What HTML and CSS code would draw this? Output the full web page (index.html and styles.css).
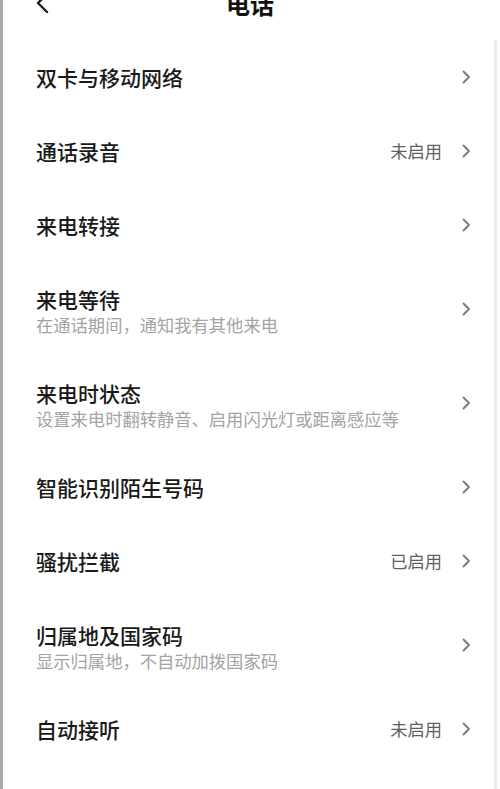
FILE: index.html
```html
<!DOCTYPE html>
<html lang="zh-CN">
<head>
<meta charset="utf-8">
<title>电话</title>
<link rel="stylesheet" href="styles.css">
</head>
<body>
<div class="screen">
  <header class="header">
    <span class="back">
      <svg width="14" height="22" viewBox="0 0 14 22"><path d="M11 1 L2 10 L11 19" fill="none" stroke="#1a1a1a" stroke-width="2.4" stroke-linecap="round" stroke-linejoin="round"/></svg>
    </span>
    <h1 class="title">电话</h1>
  </header>
  <main class="list">
    <div class="row"><div class="text"><div class="label">双卡与移动网络</div></div><span class="chev"><svg width="9" height="14" viewBox="0 0 9 14"><path d="M1.5 1.5 L7 7 L1.5 12.5" fill="none" stroke="#7a7a7a" stroke-width="1.8" stroke-linecap="round" stroke-linejoin="round"/></svg></span></div>
    <div class="row"><div class="text"><div class="label">通话录音</div></div><span class="value">未启用</span><span class="chev"><svg width="9" height="14" viewBox="0 0 9 14"><path d="M1.5 1.5 L7 7 L1.5 12.5" fill="none" stroke="#7a7a7a" stroke-width="1.8" stroke-linecap="round" stroke-linejoin="round"/></svg></span></div>
    <div class="row"><div class="text"><div class="label">来电转接</div></div><span class="chev"><svg width="9" height="14" viewBox="0 0 9 14"><path d="M1.5 1.5 L7 7 L1.5 12.5" fill="none" stroke="#7a7a7a" stroke-width="1.8" stroke-linecap="round" stroke-linejoin="round"/></svg></span></div>
    <div class="row two"><div class="text"><div class="label">来电等待</div><div class="sub">在通话期间，通知我有其他来电</div></div><span class="chev"><svg width="9" height="14" viewBox="0 0 9 14"><path d="M1.5 1.5 L7 7 L1.5 12.5" fill="none" stroke="#7a7a7a" stroke-width="1.8" stroke-linecap="round" stroke-linejoin="round"/></svg></span></div>
    <div class="row two"><div class="text"><div class="label">来电时状态</div><div class="sub">设置来电时翻转静音、启用闪光灯或距离感应等</div></div><span class="chev"><svg width="9" height="14" viewBox="0 0 9 14"><path d="M1.5 1.5 L7 7 L1.5 12.5" fill="none" stroke="#7a7a7a" stroke-width="1.8" stroke-linecap="round" stroke-linejoin="round"/></svg></span></div>
    <div class="row"><div class="text"><div class="label">智能识别陌生号码</div></div><span class="chev"><svg width="9" height="14" viewBox="0 0 9 14"><path d="M1.5 1.5 L7 7 L1.5 12.5" fill="none" stroke="#7a7a7a" stroke-width="1.8" stroke-linecap="round" stroke-linejoin="round"/></svg></span></div>
    <div class="row"><div class="text"><div class="label">骚扰拦截</div></div><span class="value">已启用</span><span class="chev"><svg width="9" height="14" viewBox="0 0 9 14"><path d="M1.5 1.5 L7 7 L1.5 12.5" fill="none" stroke="#7a7a7a" stroke-width="1.8" stroke-linecap="round" stroke-linejoin="round"/></svg></span></div>
    <div class="row two"><div class="text"><div class="label">归属地及国家码</div><div class="sub">显示归属地，不自动加拨国家码</div></div><span class="chev"><svg width="9" height="14" viewBox="0 0 9 14"><path d="M1.5 1.5 L7 7 L1.5 12.5" fill="none" stroke="#7a7a7a" stroke-width="1.8" stroke-linecap="round" stroke-linejoin="round"/></svg></span></div>
    <div class="row"><div class="text"><div class="label">自动接听</div></div><span class="value">未启用</span><span class="chev"><svg width="9" height="14" viewBox="0 0 9 14"><path d="M1.5 1.5 L7 7 L1.5 12.5" fill="none" stroke="#7a7a7a" stroke-width="1.8" stroke-linecap="round" stroke-linejoin="round"/></svg></span></div>
  </main>
</div>
</body>
</html>
```

FILE: styles.css
```css
* { box-sizing: border-box; }
html, body {
  margin: 0;
  padding: 0;
  background: #ffffff;
}
body {
  font-family: "Noto Sans CJK SC", "Noto Sans", sans-serif;
  color: #1a1a1a;
}
.screen {
  width: 500px;
  height: 789px;
  overflow: hidden;
  border-left: 3px solid #a9a9a9;
  background: #ffffff;
  display: flex;
  flex-direction: column;
}
.header {
  height: 40px;
  flex: none;
  display: flex;
  align-items: flex-start;
  position: relative;
}
.back {
  margin-left: 33px;
  margin-top: -7px;
  display: block;
  height: 22px;
}
.back svg { display: block; }
.title {
  margin: -9px 0 0 0;
  font-size: 24px;
  line-height: 26px;
  font-weight: 700;
  color: #111111;
  position: absolute;
  left: 0;
  right: 0;
  top: 0;
  text-align: center;
  padding-right: 3px;
}
.list {
  flex: 1;
  margin-right: 3px;
  border-right: 3px solid #ececec;
}
.row {
  height: 74px;
  display: flex;
  align-items: center;
  padding: 0 23px 0 33px;
}
.row.two {
  height: 94px;
}
.text {
  flex: 1;
  min-width: 0;
}
.row .text {
  padding-bottom: 1px;
}
.row.two .text {
  padding-top: 3px;
  padding-bottom: 0;
}
.label {
  font-size: 21px;
  line-height: 28px;
  font-weight: 500;
  color: #1a1a1a;
  white-space: nowrap;
}
.sub {
  font-size: 17.3px;
  line-height: 23px;
  color: #a3a3a3;
  white-space: nowrap;
}
.value {
  font-size: 17.3px;
  line-height: 24px;
  color: #5f5f5f;
  margin-right: 20px;
}
.chev {
  display: block;
  width: 9px;
  height: 14px;
}
.chev svg { display: block; }
```
